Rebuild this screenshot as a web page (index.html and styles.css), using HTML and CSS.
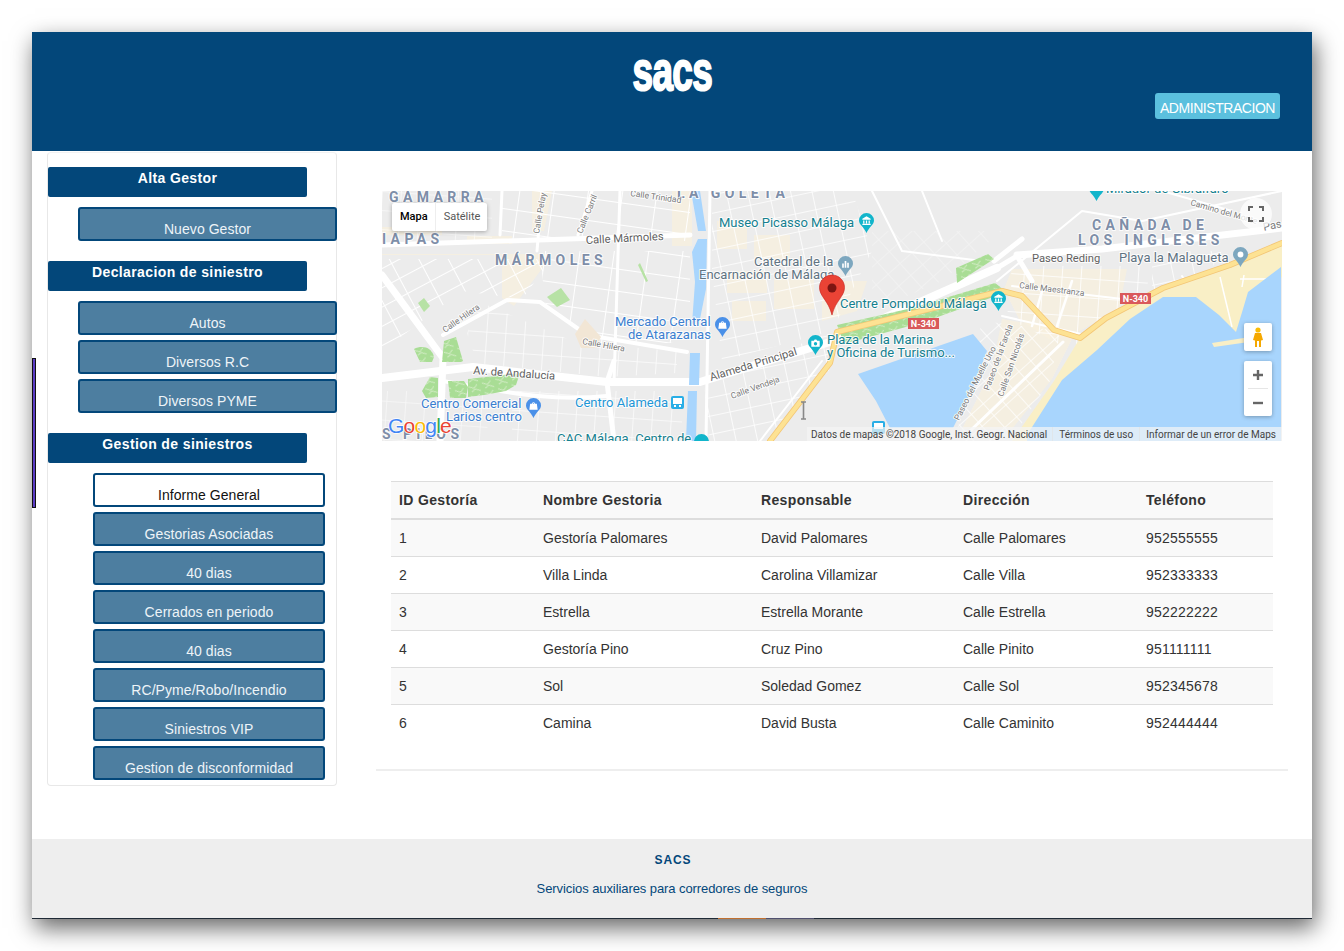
FILE: index.html
```html
<!DOCTYPE html>
<html lang="es">
<head>
<meta charset="utf-8">
<title>SACS</title>
<link rel="stylesheet" href="styles.css">
</head>
<body>
<div class="window">
  <span class="edge-strip"></span>
  <header class="top">
    <div class="logo"><span class="logo-text">sacs</span></div>
    <a class="admin">ADMINISTRACION</a>
  </header>
  <div class="content">
    <nav class="side">
      <h4 class="head">Alta Gestor</h4>
      <div class="group">
        <a class="btn">Nuevo Gestor</a>
      </div>
      <h4 class="head">Declaracion de siniestro</h4>
      <div class="group">
        <a class="btn">Autos</a>
        <a class="btn">Diversos R.C</a>
        <a class="btn">Diversos PYME</a>
      </div>
      <h4 class="head">Gestion de siniestros</h4>
      <div class="group group-deep">
        <a class="btn btn-active">Informe General</a>
        <a class="btn">Gestorias Asociadas</a>
        <a class="btn">40 dias</a>
        <a class="btn">Cerrados en periodo</a>
        <a class="btn">40 dias</a>
        <a class="btn">RC/Pyme/Robo/Incendio</a>
        <a class="btn">Siniestros VIP</a>
        <a class="btn">Gestion de disconformidad</a>
      </div>
    </nav>
    <main class="main">
      <div class="map">
        <svg class="map-art" viewBox="0 0 900 250" width="900" height="250">
          <defs>
            <pattern id="gridA" width="26" height="17" patternUnits="userSpaceOnUse" patternTransform="rotate(-28)">
              <path d="M0 0H26M0 0V17" stroke="#fff" stroke-width="2" fill="none"/>
            </pattern>
            <pattern id="gridB" width="34" height="22" patternUnits="userSpaceOnUse" patternTransform="rotate(8)">
              <path d="M0 0H34M0 0V22" stroke="#fff" stroke-width="2" fill="none"/>
            </pattern>
            <pattern id="gridC" width="21" height="18" patternUnits="userSpaceOnUse" patternTransform="rotate(-12)">
              <path d="M0 0H21M0 0V18" stroke="#fff" stroke-width="1.6" fill="none"/>
            </pattern>
            <pattern id="gridD" width="19" height="19" patternUnits="userSpaceOnUse" patternTransform="rotate(4)">
              <path d="M0 0H19M0 0V19" stroke="#fff" stroke-width="1.6" fill="none"/>
            </pattern>
            <pattern id="gridE" width="16" height="16" patternUnits="userSpaceOnUse" patternTransform="rotate(-42)">
              <path d="M0 0H16M0 0V16" stroke="#fff" stroke-width="1.6" fill="none"/>
            </pattern>
            <pattern id="parkP" width="14" height="10" patternUnits="userSpaceOnUse" patternTransform="rotate(-16)">
              <rect width="14" height="10" fill="#a9dd95"/><path d="M1 2l5 3 4-3M3 8l4-2 5 3" stroke="#d7eeca" stroke-width="1" fill="none"/>
            </pattern>
            <symbol id="pin" viewBox="0 0 18 24">
              <path d="M9 0a9 9 0 0 1 9 9c0 5-6 8-9 15C6 17 0 14 0 9a9 9 0 0 1 9-9z"/>
            </symbol>
            <symbol id="g-museum" viewBox="0 0 18 24">
              <path d="M9 4l5 3v1H4V7zM5 9h1.500v3.500H5zM8.250 9h1.500v3.500h-1.500zM11.500 9H13v3.500h-1.500zM4 13h10v1.500H4z" fill="#fff"/>
            </symbol>
            <symbol id="g-shop" viewBox="0 0 18 24">
              <path d="M5 7h8l1 7H4zM7 7a2 2 0 0 1 4 0h-1a1 1 0 0 0-2 0z" fill="#fff"/>
            </symbol>
            <symbol id="g-info" viewBox="0 0 18 24">
              <path d="M4 7h3l1-1.500h2L11 7h3v7H4z" fill="#fff"/><circle cx="9" cy="10.500" r="2" fill="#12b5cb"/>
            </symbol>
            <symbol id="g-hall" viewBox="0 0 18 24">
              <path d="M5 9h2v5H5zM8 6h2v8H8zM11 8h2v6h-2z" fill="#fff"/>
            </symbol>
            <symbol id="g-dot" viewBox="0 0 18 24">
              <circle cx="9" cy="9" r="3.500" fill="#fff"/>
            </symbol>
          </defs>
          <rect width="900" height="250" fill="#ececec"/>

          <!-- cream blocks -->
          <g class="cream">
            <path d="M0 63h170l-8 12-30 40-12-8V64H0zM85 45h45v8H85zM290 0h20v55h-20z"/>
            <path d="M150 0h20l-8 40h-12zM0 36h60v8H0z"/>
            <path d="M335 30h30v28h-30zM372 44h36v24h-36zM345 80h40v22h-40zM392 88h40v30h-40zM350 110h34v20h-34z"/>
            <path d="M630 78h115l-8 40-45 25-25 5-30-20-15-30zM440 90h45l-10 30-35 10z"/>
            <path d="M620 128l48 8 22 12-20 40-40 50h-50l30-60z"/>
          </g>
          <!-- street grids -->
          <path d="M0 68h170l-30 40-60-8-80 60z" fill="url(#gridA)"/>
          <path d="M158 60h150v92h-95l-50-40z" fill="url(#gridB)"/>
          <path d="M120 0h188v50H120z" fill="url(#gridB)"/>
          <path d="M0 0h110v50H0z" fill="url(#gridD)" opacity=".7"/>
          <path d="M100 112l95 40 100 8v22l-70 4-130-14-10-30z" fill="url(#gridD)" opacity=".85"/>
          <path d="M330 0h140l20 60-40 80-110 30-10-90z" fill="url(#gridC)"/>
          <path d="M322 190l125-48 5 32-70 76h-55z" fill="url(#gridC)"/>
          <path d="M0 200h120l-20 50H0z" fill="url(#gridD)" opacity=".6"/>
          <path d="M130 200h170v50H130z" fill="url(#gridD)" opacity=".8"/>
          <path d="M490 40h130l-60 50-70 30z" fill="url(#gridE)" opacity=".35"/>
          <path d="M630 75h140l-15 60-20 12-50 10-60-30z" fill="url(#gridD)"/>
          <path d="M770 60h70l-20 35-50 12z" fill="url(#gridC)"/>
          <path d="M600 130l78 10-10 50-40 60h-55z" fill="url(#gridE)" opacity=".9"/>

          <!-- big white roads -->
          <g fill="none" stroke="#fff" stroke-linecap="round" stroke-linejoin="round">
            <path d="M0 187L91 176 225 191 318 191 448 151 615 77" stroke-width="8"/>
            <path d="M635 64L720 58 900 37" stroke-width="7"/>
            <path d="M0 84L61 167 58 250" stroke-width="7"/>
            <path d="M225 191L232 250M225 191L232 170" stroke-width="5"/>
            <path d="M61 144L125 109 158 111 205 144 305 161" stroke-width="4"/>
            <path d="M0 54L308 44" stroke-width="5"/>
            <path d="M61 190C140 205 180 210 225 205" stroke-width="4"/>
            <path d="M120 0L118 44M238 0L232 192M328 0L324 250M160 0L155 60M210 0L196 44" stroke-width="3"/>
            <path d="M615 77L635 65 650 90M612 70L640 48" stroke-width="5"/>
            <path d="M615 90L700 20 760 30 900 0" stroke-width="2"/>
            <path d="M490 0L520 60 600 70M540 0L560 50M780 0L850 20" stroke-width="2"/>
            <path d="M660 100L650 135M690 90L675 135" stroke-width="2.500"/>
            <path d="M630 95L800 115M620 125L730 150" stroke-width="2"/>
            <path d="M800 85L810 100M840 80L850 90" stroke-width="2"/>
            <path d="M440 170L378 250" stroke-width="2"/>
            <path d="M588 240L681 151" stroke-width="3"/>
          </g>

          <!-- beach -->
          <path d="M900 50L848 72 781 95 724 125 698 147 672 190 630 250H700L800 130 870 160 900 85z" fill="#f9efc6"/>
          <path d="M838 86l12 50M858 88h30M862 84l-2 12" stroke="#fff" stroke-width="1.500" fill="none"/>
          <!-- sea -->
          <path d="M645 244l35-55 35-30 33-31 33-22 33 0 23 18 17 17 7-23 5-17 33-25v195H645z" fill="#a8d5fd"/>
          <path d="M830 152l38-6 6 4-42 6z" fill="#f9efc6"/>
          <!-- port -->
          <path d="M476 183l115-40 14 17-14 37-20 40H508l-14-27z" fill="#a8d5fd"/>
          <!-- river -->
          <path d="M309 0h9l6 40h-8zM316 48h9l-1 50-6 30-8 5 3-42-3-30zM308 162h10l-1 32h-10zM306 200h9l-1 50h-10z" fill="#a8d5fd"/>

          <!-- parks -->
          <path d="M455 134l75-17 83-25 12 9-83 30-80 22z" fill="url(#parkP)"/>
          <path d="M574 77l32-14 6 5-37 24z" fill="url(#parkP)"/>
          <path d="M32 158c8-4 18-2 20 8l-2 5H38zM62 150l12-4 7 24-2 1H60zM40 200l8-14 8 1v19l-12 1zM66 190h16l4 6-2 11H68zM86 188l52-6-4 12-10 6-22 4-16 2z" fill="url(#parkP)"/>
          <path d="M258 72l8 18-2 1-8-17zM165 106l14-9 9 12-13 7zM36 112l6-5 6 8-6 6z" fill="#b7e2a5"/>
          <path d="M203 128l16 18-6 11h-14l-6-14z" fill="#f2e6d5"/>

          <!-- motorway -->
          <g fill="none" stroke-linejoin="round" stroke-linecap="round">
            <path d="M388 250L448 172 455 141 620 100 640 105 672 139 698 147 724 127 781 97 848 74 900 52" stroke="#f3c676" stroke-width="6"/>
            <path d="M388 250L448 172 455 141 620 100 640 105 672 139 698 147 724 127 781 97 848 74 900 52" stroke="#fde293" stroke-width="4.400"/>
          </g>

          <!-- labels -->
          <g class="halo">
            <g class="t-area">
              <text x="7" y="11">GAMARRA</text>
              <text x="0" y="53">IAPAS</text>
              <text x="113" y="74">MÁRMOLES</text>
              <text x="295" y="7">LA GOLETA</text>
              <text x="710" y="39">CAÑADA DE</text>
              <text x="696" y="54">LOS INGLESES</text>
              <text x="0" y="248">S  PILOS</text>
            </g>
            <g class="t-road">
              <text x="204" y="53" transform="rotate(-3 204 53)">Calle Mármoles</text>
              <text x="91" y="183" transform="rotate(4 91 183)">Av. de Andalucía</text>
              <text x="329" y="190" transform="rotate(-17 329 190)">Alameda Principal</text>
              <text x="650" y="71">Paseo Reding</text>
            </g>
            <g class="t-small">
              <text x="63" y="142" transform="rotate(-35 63 142)">Calle Hilera</text>
              <text x="200" y="153" transform="rotate(10 200 153)">Calle Hilera</text>
              <text x="350" y="208" transform="rotate(-20 350 208)">Calle Vendeja</text>
              <text x="157" y="43" transform="rotate(-80 157 43)">Calle Pelay</text>
              <text x="200" y="43" transform="rotate(-68 200 43)">Calle Carril</text>
              <text x="248" y="5" transform="rotate(8 248 5)">Calle Trinidad</text>
              <text x="637" y="97" transform="rotate(7 637 97)">Calle Maestranza</text>
              <text x="577" y="230" transform="rotate(-63 577 230)">Paseo del Muelle Uno</text>
              <text x="607" y="200" transform="rotate(-70 607 200)">Paseo de la Farola</text>
              <text x="621" y="206" transform="rotate(-71 621 206)">Calle San Nicolás</text>
              <text x="808" y="14" transform="rotate(16 808 14)">Camino del Monte</text>
              <text x="882" y="40" transform="rotate(-12 882 40)" class="t-pas">Pas</text>
            </g>
            <g class="t-teal">
              <text x="337" y="36">Museo Picasso Málaga</text>
              <text x="458" y="117">Centre Pompidou Málaga</text>
              <text x="445" y="153">Plaza de la Marina</text>
              <text x="445" y="166">y Oficina de Turismo...</text>
              <text x="724" y="2">Mirador de Gibralfaro</text>
            </g>
            <g class="t-dark">
              <text x="372" y="75">Catedral de la</text>
              <text x="317" y="88">Encarnación de Málaga</text>
              <text x="737" y="71">Playa la Malagueta</text>
            </g>
            <g class="t-blue">
              <text x="233" y="135">Mercado Central</text>
              <text x="246" y="148">de Atarazanas</text>
              <text x="39" y="217">Centro Comercial</text>
              <text x="64" y="230">Larios centro</text>
            </g>
            <g class="t-transit">
              <text x="193" y="216">Centro Alameda</text>
            </g>
            <text class="t-teal-plain" x="175" y="252">CAC Málaga. Centro de</text>
          </g>

          <!-- POI pins -->
          <use href="#pin" x="477" y="22" width="15" height="20" fill="#12b5cb"/>
          <use href="#g-museum" x="477" y="22" width="15" height="20"/>
          <use href="#pin" x="609" y="100" width="15" height="20" fill="#12b5cb"/>
          <use href="#g-museum" x="609" y="100" width="15" height="20"/>
          <use href="#pin" x="851" y="56" width="15" height="20" fill="#7da7bf"/>
          <use href="#g-dot" x="851" y="56" width="15" height="20"/>
          <use href="#pin" x="456" y="65" width="15" height="20" fill="#7da7bf"/>
          <use href="#g-hall" x="456" y="65" width="15" height="20"/>
          <use href="#pin" x="333" y="126" width="15" height="20" fill="#4a90e8"/>
          <use href="#g-shop" x="333" y="126" width="15" height="20"/>
          <use href="#pin" x="144" y="207" width="15" height="20" fill="#4a90e8"/>
          <use href="#g-shop" x="144" y="207" width="15" height="20"/>
          <use href="#pin" x="426" y="144" width="15" height="20" fill="#12b5cb"/>
          <use href="#g-info" x="426" y="144" width="15" height="20"/>
          <use href="#pin" x="707" y="-10" width="15" height="20" fill="#12b5cb"/>
          <use href="#pin" x="312" y="243" width="15" height="20" fill="#12b5cb"/>
          <rect x="289" y="205" width="13" height="13" rx="2" fill="#29aee6"/>
          <rect x="291" y="207" width="9" height="6" fill="#fff"/>
          <path d="M292 214h2v2h-2zM297 214h2v2h-2z" fill="#fff"/>
          <rect x="490" y="230" width="13" height="13" rx="2" fill="#29aee6"/>
          <rect x="492" y="232" width="9" height="6" fill="#fff"/>

          <!-- shields -->
          <g class="shield">
            <rect x="526" y="127" width="31" height="11" fill="#d9595b"/>
            <text x="541.500" y="136">N-340</text>
            <rect x="738" y="102" width="31" height="11" fill="#d9595b"/>
            <text x="753.500" y="111">N-340</text>
          </g>

          <!-- main marker -->
          <path d="M450 84c7 0 12.500 5.500 12.500 12.500 0 9-9 13-12.500 27.500-3.500-14.500-12.500-18.500-12.500-27.500C437.500 89.500 443 84 450 84z" fill="#ea4335" stroke="#c5221f" stroke-width=".6"/>
          <circle cx="450" cy="97" r="4.500" fill="#7c1512"/>

          <!-- text cursor -->
          <path d="M419 211h5M419 228h5M421.500 211v17" stroke="#888" stroke-width="1.600" fill="none"/>

          <!-- google wordmark -->
          <g class="gword">
            <text x="6" y="242"><tspan fill="#4285f4">G</tspan><tspan fill="#ea4335">o</tspan><tspan fill="#fbbc05">o</tspan><tspan fill="#4285f4">g</tspan><tspan fill="#34a853">l</tspan><tspan fill="#ea4335">e</tspan></text>
          </g>
        </svg>

        <div class="maptype"><span class="mt mt-on">Mapa</span><span class="mt">Satélite</span></div>
        <div class="fs">
          <svg viewBox="0 0 16 16" width="16" height="16"><path d="M1 5V1h4M11 1h4v4M15 11v4h-4M5 15H1v-4" fill="none" stroke="#666" stroke-width="2"/></svg>
        </div>
        <div class="peg">
          <svg viewBox="0 0 12 20" width="12" height="20"><circle cx="6" cy="3" r="2.600" fill="#fbbc04"/><path d="M3 6h6l2 7-2 .5V20H7v-6H5v6H3v-6.500L1 13z" fill="#f5a800"/></svg>
        </div>
        <div class="zoomer">
          <span class="z z-plus"><svg viewBox="0 0 12 12" width="12" height="12"><path d="M6 1v10M1 6h10" stroke="#666" stroke-width="2.400"/></svg></span>
          <span class="z-sep"></span>
          <span class="z"><svg viewBox="0 0 12 12" width="12" height="12"><path d="M1 6h10" stroke="#666" stroke-width="2.400"/></svg></span>
        </div>
        <div class="attrib">
          <span class="at">Datos de mapas ©2018 Google, Inst. Geogr. Nacional</span>
          <span class="at">Términos de uso</span>
          <span class="at">Informar de un error de Maps</span>
        </div>
      </div>

      <table class="tbl">
        <colgroup><col class="c1"><col class="c2"><col class="c3"><col class="c4"><col class="c5"></colgroup>
        <thead>
          <tr><th>ID Gestoría</th><th>Nombre Gestoria</th><th>Responsable</th><th>Dirección</th><th>Teléfono</th></tr>
        </thead>
        <tbody>
          <tr><td>1</td><td>Gestoría Palomares</td><td>David Palomares</td><td>Calle Palomares</td><td>952555555</td></tr>
          <tr><td>2</td><td>Villa Linda</td><td>Carolina Villamizar</td><td>Calle Villa</td><td>952333333</td></tr>
          <tr><td>3</td><td>Estrella</td><td>Estrella Morante</td><td>Calle Estrella</td><td>952222222</td></tr>
          <tr><td>4</td><td>Gestoría Pino</td><td>Cruz Pino</td><td>Calle Pinito</td><td>951111111</td></tr>
          <tr><td>5</td><td>Sol</td><td>Soledad Gomez</td><td>Calle Sol</td><td>952345678</td></tr>
          <tr><td>6</td><td>Camina</td><td>David Busta</td><td>Calle Caminito</td><td>952444444</td></tr>
        </tbody>
      </table>
      <hr class="rule">
    </main>
  </div>
  <footer class="foot">
    <strong class="foot-title">SACS</strong>
    <p class="foot-sub">Servicios auxiliares para corredores de seguros</p>
    <span class="taskbits"><i class="bit-a"></i><i class="bit-b"></i></span>
  </footer>
</div>
</body>
</html>
```

FILE: styles.css
```css
* { box-sizing: border-box; }
html, body { margin: 0; height: 100%; }
body {
  background: #fff;
  padding: 32px;
  font-family: "Liberation Sans", Arial, sans-serif;
  font-size: 14px;
  color: #333;
  overflow: hidden;
}
.window {
  position: relative;
  width: 1280px;
  height: 887px;
  background: #fff;
  box-shadow: 3px 9px 22px rgba(0, 0, 0, .6);
  display: flex;
  flex-direction: column;
  border-bottom: 1px solid #1f2a36;
}
.edge-strip {
  position: absolute;
  left: 0;
  top: 326px;
  width: 4px;
  height: 150px;
  background: #5b3cc4;
  border: 1px solid #111;
}
.top {
  flex: 0 0 119px;
  background: #03477a;
  display: flex;
  flex-direction: column;
  align-items: center;
  padding-top: 16px;
  position: relative;
}
.logo { height: 46px; line-height: 46px; }
.logo-text {
  display: inline-block;
  font-family: "Liberation Sans", Arial, sans-serif;
  font-weight: 700;
  font-size: 56px;
  line-height: 46px;
  color: #fff;
  -webkit-text-stroke: 2px #fff;
  letter-spacing: -1px;
  transform: scaleX(.66);
}
.admin {
  align-self: flex-end;
  margin: -1px 32px 0 0;
  width: 125px;
  height: 26px;
  line-height: 30px;
  background: #5bc0de;
  border-radius: 3px;
  color: #fff;
  font-size: 14px;
  letter-spacing: -.45px;
  text-align: center;
  white-space: nowrap;
}
.content { flex: 1; display: flex; align-items: flex-start; }
.side {
  width: 290px;
  height: 634px;
  margin: 1px 0 0 15px;
  padding: 14px 0 0 0;
  border: 1px solid #e8e8e8;
  border-top-color: #f2f2f2;
  border-radius: 4px;
  background: #fff;
  flex: none;
}
.head {
  margin: 0;
  width: 259px;
  height: 30px;
  padding-top: 1px;
  background: #03477a;
  border-radius: 2px;
  color: #fff;
  font-size: 14px;
  line-height: 20px;
  font-weight: 700;
  text-align: center;
  letter-spacing: .38px;
}
.group {
  display: flex;
  flex-direction: column;
  gap: 5px;
  margin-right: -1px;
  padding: 10px 0 20px 30px;
}
.group-deep { margin-right: 0; padding: 10px 11px 0 45px; }
.btn {
  display: block;
  height: 34px;
  padding-top: 10px;
  border: 2px solid #03477a;
  border-radius: 3px;
  background: #4d7ea0;
  color: #eef4f8;
  font-size: 14px;
  line-height: 20px;
  letter-spacing: .06px;
  text-align: center;
  white-space: nowrap;
}
.btn-active { background: #fff; color: #111; }
.main { flex: 1; padding: 40px 30px 0 45px; }
.map {
  position: relative;
  width: 900px;
  height: 250px;
  overflow: hidden;
  font-family: Roboto, Arial, sans-serif;
}
.map-art { display: block; }
.map-art text { font-family: Roboto, Arial, sans-serif; }
.cream path { fill: #f8f0dd; opacity: .75; }
.halo text { paint-order: stroke; stroke: rgba(255, 255, 255, .85); stroke-width: 2px; stroke-linejoin: round; }
.t-area text { font-size: 14px; font-weight: 700; fill: #7e8ea8; letter-spacing: 4.4px; }
.t-road text { font-size: 11.200px; font-weight: 400; fill: #616161; }
.t-small text { font-size: 8.500px; fill: #7a7a7a; }
.t-small .t-pas { font-size: 11px; }
.t-teal text { font-size: 13px; fill: #15808f; }
.t-dark text { font-size: 13px; fill: #5f7382; }
.t-blue text { font-size: 13px; fill: #3b7fd0; }
.t-transit text { font-size: 13px; fill: #1f96d6; }
.halo .t-teal-plain { font-size: 13px; fill: #15808f; }
.shield text { font-size: 9px; font-weight: 700; fill: #fff; text-anchor: middle; }
.gword text { font-family: "Liberation Sans", Arial, sans-serif; font-size: 21px; font-weight: 400; letter-spacing: -.8px; paint-order: stroke; stroke: #fff; stroke-width: 1.500px; }
.maptype {
  position: absolute;
  left: 10px;
  top: 12px;
  display: flex;
  height: 28px;
  background: #fff;
  border-radius: 2px;
  box-shadow: 0 1px 4px rgba(0, 0, 0, .3);
}
.mt {
  padding: 0 7px 0 8px;
  line-height: 27px;
  font-size: 11px;
  color: #565656;
}
.mt-on { color: #000; font-weight: 500; border-right: 1px solid #eee; }
.fs {
  position: absolute;
  right: 10px;
  top: 7px;
  width: 32px;
  height: 32px;
  border-radius: 50%;
  background: rgba(255, 255, 255, .75);
  display: flex;
  align-items: center;
  justify-content: center;
}
.peg {
  position: absolute;
  right: 10px;
  top: 132px;
  width: 28px;
  height: 28px;
  background: #fff;
  border-radius: 2px;
  box-shadow: 0 1px 4px rgba(0, 0, 0, .3);
  display: flex;
  align-items: center;
  justify-content: center;
}
.zoomer {
  position: absolute;
  right: 10px;
  top: 170px;
  width: 28px;
  height: 55px;
  background: #fff;
  border-radius: 2px;
  box-shadow: 0 1px 4px rgba(0, 0, 0, .3);
  display: flex;
  flex-direction: column;
  align-items: center;
}
.z { height: 27px; display: flex; align-items: center; justify-content: center; }
.z-sep { width: 20px; height: 1px; background: #e6e6e6; flex: none; }
.attrib {
  position: absolute;
  right: 0;
  bottom: 0;
  height: 14px;
  display: flex;
  background: rgba(245, 245, 245, .7);
  font-size: 10px;
  line-height: 15px;
  color: #444;
  white-space: nowrap;
}
.at { padding: 0 6px 0 6px; border-left: 1px solid #e0e6ea; }
.at:first-child { padding: 0 5px 0 4px; border-left: 0; }
.tbl {
  margin: 40px 0 0 9px;
  width: 882px;
  border-collapse: collapse;
  table-layout: fixed;
}
.c1 { width: 144px; }
.c2 { width: 218px; }
.c3 { width: 202px; }
.c4 { width: 183px; }
.c5 { width: 135px; }
.tbl th, .tbl td {
  padding: 8px;
  line-height: 20px;
  text-align: left;
  font-size: 14px;
}
.tbl th { font-weight: 700; letter-spacing: .35px; border-top: 1px solid #ddd; border-bottom: 2px solid #ddd; background: #f9f9f9; height: 37px; padding-top: 8px; padding-bottom: 7px; }
.tbl td { border-bottom: 1px solid #ddd; height: 37px; }
.tbl td:last-child { letter-spacing: .2px; }
.tbl tbody tr:last-child td { border-bottom: 0; }
.tbl tbody tr:nth-child(odd) td { background: #f9f9f9; }
.rule {
  margin: 28px 0 0 -6px;
  width: 912px;
  border: 0;
  border-top: 2px solid #eee;
}
.foot {
  flex: 0 0 79px;
  background: #eee;
  position: relative;
  text-align: center;
  color: #03477a;
  font-size: 12px;
  padding-top: 14px;
}
.foot-title { display: block; line-height: 14px; letter-spacing: .9px; font-size: 12px; padding-left: 2px; }
.foot-sub { margin: 15px 0 0; line-height: 14px; font-size: 13px; letter-spacing: -.08px; }
.taskbits { position: absolute; left: 686px; bottom: -1px; display: flex; height: 1px; }
.bit-a { width: 48px; background: #c07030; }
.bit-b { width: 48px; background: #50506e; }
```
